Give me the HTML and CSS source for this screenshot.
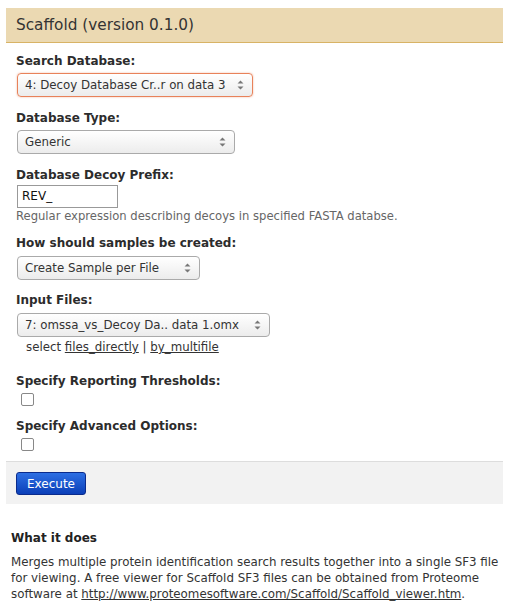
FILE: index.html
```html
<!DOCTYPE html>
<html>
<head>
<meta charset="utf-8">
<link rel="stylesheet" href="styles.css">
</head>
<body>
<div class="tool-form">
  <div class="tool-title">Scaffold (version 0.1.0)</div>
  <div class="tool-body">
    <div class="row">
      <label class="lbl">Search Database:</label>
      <div class="sel-wrap focus" style="width:236px">
        <div class="sel">4: Decoy Database Cr..r on data 3</div>
        <span class="arrows"><svg width="7" height="12" viewBox="0 0 7 12"><path d="M0.5 4.5 L3.5 1.5 L6.5 4.5 Z M0.5 7.5 L3.5 10.5 L6.5 7.5 Z" fill="#777"/></svg></span>
      </div>
    </div>
    <div class="row row-shift">
      <label class="lbl">Database Type:</label>
      <div class="sel-wrap" style="width:218px">
        <div class="sel">Generic</div>
        <span class="arrows"><svg width="7" height="12" viewBox="0 0 7 12"><path d="M0.5 4.5 L3.5 1.5 L6.5 4.5 Z M0.5 7.5 L3.5 10.5 L6.5 7.5 Z" fill="#777"/></svg></span>
      </div>
    </div>
    <div class="row row-shift">
      <label class="lbl lbl-tight">Database Decoy Prefix:</label>
      <div class="text-input">REV_</div>
      <div class="help">Regular expression describing decoys in specified FASTA databse.</div>
    </div>
    <div class="row">
      <label class="lbl lbl-wide">How should samples be created:</label>
      <div class="sel-wrap" style="width:183px">
        <div class="sel">Create Sample per File</div>
        <span class="arrows"><svg width="7" height="12" viewBox="0 0 7 12"><path d="M0.5 4.5 L3.5 1.5 L6.5 4.5 Z M0.5 7.5 L3.5 10.5 L6.5 7.5 Z" fill="#777"/></svg></span>
      </div>
    </div>
    <div class="row">
      <label class="lbl lbl-wide">Input Files:</label>
      <div class="sel-wrap" style="width:253px">
        <div class="sel">7: omssa_vs_Decoy Da.. data 1.omx</div>
        <span class="arrows"><svg width="7" height="12" viewBox="0 0 7 12"><path d="M0.5 4.5 L3.5 1.5 L6.5 4.5 Z M0.5 7.5 L3.5 10.5 L6.5 7.5 Z" fill="#777"/></svg></span>
      </div>
      <div class="multi">select <a href="#">files_directly</a> | <a href="#">by_multifile</a></div>
    </div>
    <div class="row row-check">
      <label class="lbl">Specify Reporting Thresholds:</label>
      <span class="check"></span>
    </div>
    <div class="row">
      <label class="lbl">Specify Advanced Options:</label>
      <span class="check"></span>
    </div>
  </div>
  <div class="tool-footer">
    <button class="btn">Execute</button>
  </div>
</div>
<div class="help-section">
  <h3>What it does</h3>
  <p>Merges multiple protein identification search results together into a single SF3 file for viewing. A free viewer for Scaffold SF3 files can be obtained from Proteome software at <a href="#">http://www.proteomesoftware.com/Scaffold/Scaffold_viewer.htm</a>.</p>
</div>
</body>
</html>
```

FILE: styles.css
```css
html, body {
  margin: 0;
  padding: 0;
  background: #fff;
}
body {
  font-family: "DejaVu Sans", Verdana, sans-serif;
  font-size: 12px;
  color: #333;
  padding: 8px 3px 0 6px;
}
.tool-form {
  width: 497px;
}
.tool-title {
  background: #ebd9b2;
  border-bottom: 1px solid #d8b365;
  height: 34px;
  line-height: 34px;
  padding-left: 10px;
  font-size: 15.3px;
  color: #333;
}
.tool-body {
  padding: 11px 10px 10px 10px;
  display: flex;
  flex-direction: column;
  gap: 13px;
}
.row {
  display: flex;
  flex-direction: column;
  align-items: flex-start;
}
.row-shift { margin-top: 1px; }
.lbl {
  font-weight: bold;
  line-height: 15px;
  margin-bottom: 4px;
  color: #2c2c2c;
}
.lbl-tight { margin-bottom: 2px; }
.lbl-wide { margin-bottom: 5px; }
.sel-wrap {
  position: relative;
  margin-left: 1px;
  height: 24px;
  box-sizing: border-box;
  border: 1px solid #aaa;
  border-radius: 4px;
  background: linear-gradient(#ffffff, #ececec);
}
.sel-wrap.focus {
  border-color: #e8825a;
  box-shadow: 0 0 2px rgba(232, 130, 90, 0.6);
}
.sel {
  line-height: 22px;
  padding-left: 7px;
  font-size: 11.8px;
  color: #333;
  white-space: nowrap;
}
.arrows {
  position: absolute;
  right: 8px;
  top: 5px;
  height: 12px;
  display: block;
}
.arrows svg { display: block; }
.text-input {
  margin-left: 1px;
  width: 101px;
  height: 23px;
  box-sizing: border-box;
  border: 1px solid #999;
  line-height: 21px;
  padding-left: 4px;
  color: #111;
}
.help {
  color: #666;
  font-size: 11.6px;
  line-height: 14px;
  margin-top: 1px;
}
.multi {
  margin-left: 10px;
  margin-top: 3px;
  line-height: 14px;
  font-size: 11.8px;
  color: #333;
}
.multi a, .help-section a {
  color: #333;
  text-decoration: underline;
}
.row-check { margin-top: 7px; }
.check {
  display: block;
  width: 11px;
  height: 11px;
  margin-left: 5px;
  border: 1px solid #888;
  border-radius: 2px;
  background: #fff;
}
.tool-footer {
  background: #f2f2f2;
  border-top: 1px solid #ddd;
  padding: 10px 10px 9px 10px;
}
.btn {
  display: block;
  width: 70px;
  height: 23px;
  font-family: "DejaVu Sans", Verdana, sans-serif;
  font-size: 12px;
  color: #fff;
  border: 1px solid #0a2b8c;
  border-radius: 3px;
  background: linear-gradient(#2d6fe3, #0b3fb8);
  padding: 1px 0 0 0;
}
.help-section {
  padding: 27px 0 0 5px;
}
.help-section h3 {
  margin: 0 0 8px 0;
  font-size: 12px;
  line-height: 15px;
  font-weight: bold;
  color: #222;
}
.help-section p {
  margin: 0;
  font-size: 11.85px;
  line-height: 16px;
  color: #333;
}
```
